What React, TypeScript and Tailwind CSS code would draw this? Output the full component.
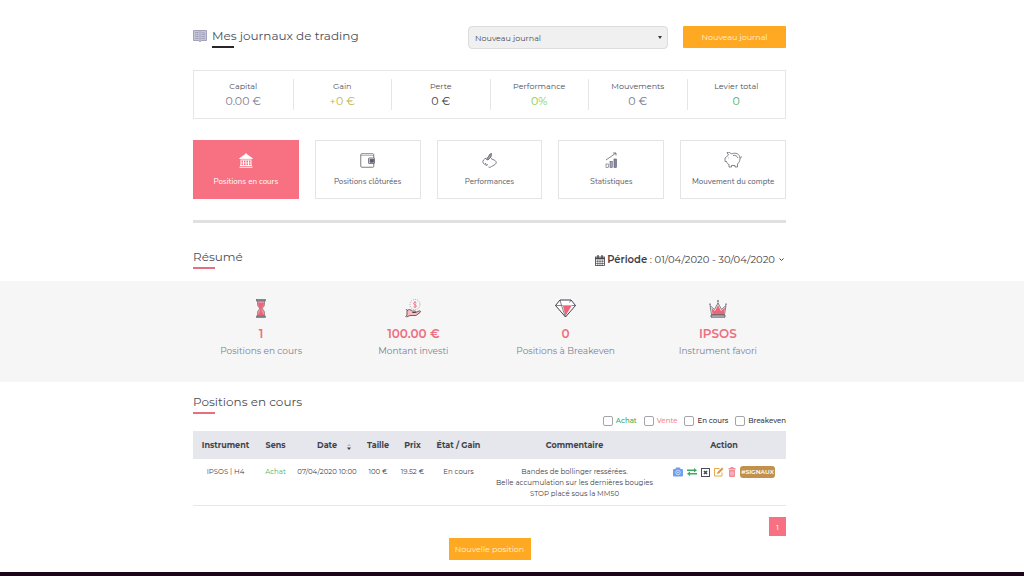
import React from 'react';

interface Stat {
    label: string;
    value: string;
    color: string;
}

const STATS: Stat[] = [
    { label: 'Capital', value: '0.00 €', color: 'text-[#7d7f8e]' },
    { label: 'Gain', value: '+0 €', color: 'text-[#c4b648]' },
    { label: 'Perte', value: '0 €', color: 'text-[#3f4047]' },
    { label: 'Performance', value: '0%', color: 'text-[#85cc4e]' },
    { label: 'Mouvements', value: '0 €', color: 'text-[#74788f]' },
    { label: 'Levier total', value: '0', color: 'text-[#45b06c]' },
];

const BookIcon = () => (
    <svg viewBox="0 0 28 28" className="h-[14px] w-[14px] shrink-0" fill="none" stroke="#a2a2bc" strokeWidth="2">
        <path d="M1 3h26v20H16l-2 3-2-3H1z" fill="#c6c6d9" />
        <path d="M14 3v20M4 7h7M4 11h3M4 15h7M4 19h7M17 7h3M17 11h7M17 15h7M17 19h7M9 9v4M22 6v4" />
    </svg>
);

const BankIcon = () => (
    <svg viewBox="0 0 28 30" className="h-[15px] w-[14px]" fill="none" stroke="currentColor" strokeWidth="1.600">
        <path d="M14 0v4" />
        <path d="M1 11 14 2l13 9z" fill="currentColor" />
        <path d="M3 14h22M2 25h24M1 28.500h26" strokeWidth="2" />
        <path d="M4 15v9M9 15v9M14 15v9M19 15v9M24 15v9" strokeWidth="2" />
        <path d="M4 20h20" strokeOpacity="0.500" strokeWidth="3" />
    </svg>
);

const WalletIcon = () => (
    <svg viewBox="0 0 30 30" className="h-[15px] w-[15px]" fill="none" stroke="currentColor" strokeWidth="1.600">
        <rect x="1.500" y="1.500" width="26" height="27" rx="2" />
        <path d="M2 5h25" strokeOpacity="0.500" />
        <rect x="17" y="10" width="12" height="11" rx="1" fill="#fff" />
        <rect x="20" y="12.500" width="7" height="6" fill="currentColor" />
    </svg>
);

const SwingIcon = () => (
    <svg viewBox="0 0 30 30" className="h-[15px] w-[15px]" fill="none" stroke="currentColor" strokeWidth="1.600" strokeLinejoin="round">
        <path d="M9 13 16 2l3-1-1 7-6 6z" fill="currentColor" fillOpacity="0.600" />
        <path d="M9 10c-6 2-8 6-7 9 0 2 2 3 4 4M7 20l1 5 4-2M13 28c2 1 4 1 6-1l7-4c4-3 3-7-2-9l-6-3" />
    </svg>
);

const ChartIcon = () => (
    <svg viewBox="0 0 26 32" className="h-4 w-[13px]" fill="none" stroke="currentColor" strokeWidth="1.200">
        <path d="M2 16 22 2M16 2h6v5" strokeWidth="1.500" />
        <rect x="2" y="24" width="4.500" height="7" />
        <rect x="10" y="19" width="4.500" height="12" fill="#a3a6bf" />
        <rect x="18" y="14" width="5" height="17" fill="#8387a5" />
    </svg>
);

const PigIcon = () => (
    <svg viewBox="0 0 36 32" className="h-4 w-[18px]" fill="none" stroke="currentColor" strokeWidth="1.500" strokeLinejoin="round">
        <path d="M9 6 6 1c4-1 7 0 9 3 9-4 17 0 17 9 0 5-2 8-5 11v6h-5v-3h-7v3h-5v-5c-3-1-4-3-5-6H2v-7c3-1 3-4 7-6z" />
        <path d="M18 7c5-1 8 1 10 5M32 12c2 0 3-1 3-3M9 12h1" />
    </svg>
);

const HourglassIcon = () => (
    <svg viewBox="0 0 20 38" className="h-[19px] w-[10px]" stroke="#6a5c68" strokeWidth="1.200">
        <path d="M3 3h14v8c0 4-4 6-4 8s4 4 4 8v8H3v-8c0-4 4-6 4-8s-4-4-4-8z" fill="#f0909c" />
        <path d="M4 8h12c0 5-4 7-5 10v7l5 7v2H4v-2l4-7v-7c-1-3-4-5-4-10z" fill="#ee6478" stroke="none" />
        <rect x="1" y="1" width="18" height="3" fill="#8b8d96" />
        <rect x="1" y="34" width="18" height="3" fill="#8b8d96" />
    </svg>
);

const HandCoinIcon = () => (
    <svg viewBox="0 0 32 38" className="h-[19px] w-4" fill="none" strokeWidth="1.500" strokeLinejoin="round">
        <circle cx="20" cy="11" r="10" stroke="#a08c93" strokeDasharray="2 2.200" />
        <path d="M23 8c-1-2-6-2-6 1 0 3 6 2 6 5s-5 3-6 1M20 4v14" stroke="#ee6478" />
        <path d="M4 23c4-3 7-2 11 1h5c2 0 2 3 0 3h-5 6l7-3c3-1 4 1 2 3l-8 6H10l-7 3" fill="#f8bcc3" stroke="#45363f" />
        <path d="M2 20l2 3v9l-3 4" stroke="#45363f" />
    </svg>
);

const DiamondIcon = () => (
    <svg viewBox="0 0 42 38" className="h-[19px] w-[21px]" fill="none" stroke="#3f414c" strokeWidth="2" strokeLinejoin="round">
        <path d="M10 2h22l9 11-20 23L1 13z" fill="#fff" />
        <path d="M16 14h17L21 34z" fill="#ee6478" stroke="none" />
        <path d="M1 13h12M33 13h8M10 2l3 11 8 23M32 2l-3 5" strokeWidth="1.300" />
        <path d="M14 13h18" stroke="#ee6478" strokeWidth="1.300" />
    </svg>
);

const CrownIcon = () => (
    <svg viewBox="0 0 36 38" className="h-[19px] w-[18px]" stroke="#3f414c" strokeWidth="1.300" strokeLinejoin="round">
        <path d="M5 31 2 13l9 8 7-13 7 13 9-8-3 18z" fill="#f3f3f5" />
        <path d="M7 30.500 5 18l7 6 6-12 6 12 8-7-2 13.500z" fill="#ee6478" stroke="none" />
        <path d="M18 2v5M2 9v3M34 9v3" strokeWidth="2" />
        <rect x="4" y="32" width="28" height="4.500" fill="#b9bac2" />
    </svg>
);

const CalendarIcon = () => (
    <svg viewBox="0 0 20 22" className="mr-0.5 h-[11px] w-[10px]" fill="none" stroke="currentColor" strokeWidth="1.600">
        <rect x="1" y="4" width="18" height="17" />
        <path d="M1 7h18" strokeWidth="3" />
        <path d="M5.500 9v12M10 9v12M14.500 9v12M1 12.500h18M1 17h18" strokeWidth="1.200" />
        <path d="M6 0v6M14 0v6" strokeWidth="2.500" />
    </svg>
);

const TABS = [
    { label: 'Positions en cours', icon: <BankIcon />, active: true },
    { label: 'Positions clôturées', icon: <WalletIcon />, active: false },
    { label: 'Performances', icon: <SwingIcon />, active: false },
    { label: 'Statistiques', icon: <ChartIcon />, active: false },
    { label: 'Mouvement du compte', icon: <PigIcon />, active: false },
];

const SUMMARY = [
    { icon: <HourglassIcon />, value: '1', label: 'Positions en cours' },
    { icon: <HandCoinIcon />, value: '100.00 €', label: 'Montant investi' },
    { icon: <DiamondIcon />, value: '0', label: 'Positions à Breakeven' },
    { icon: <CrownIcon />, value: 'IPSOS', label: 'Instrument favori' },
];

const FILTERS = [
    { id: 'achat', label: 'Achat', color: 'text-[#35ab54]' },
    { id: 'vente', label: 'Vente', color: 'text-[#f4848f]' },
    { id: 'encours', label: 'En cours', color: 'text-[#33343a]' },
    { id: 'breakeven', label: 'Breakeven', color: 'text-[#33343a]' },
];

const ACTIONS = [
    {
        label: 'Capture',
        icon: (
            <svg viewBox="0 0 20 20" className="h-[10px] w-[10px]" fill="#6f9fee">
                <path d="M6 1h8l1 3h3a2 2 0 0 1 2 2v11a2 2 0 0 1-2 2H2a2 2 0 0 1-2-2V6a2 2 0 0 1 2-2h3z" />
                <circle cx="10" cy="11" r="4.500" fill="none" stroke="#dfeafd" strokeWidth="1.500" />
                <circle cx="10" cy="11" r="1.500" fill="#dfeafd" />
            </svg>
        ),
    },
    {
        label: 'Convertir',
        icon: (
            <svg viewBox="0 0 20 16" className="h-2 w-[10px]" fill="#3aab62">
                <path d="M0 3h14V0l6 4.500L14 9V6H0zM20 10H6V7l-6 4.500L6 16v-3h14z" />
            </svg>
        ),
    },
    {
        label: 'Clôturer',
        icon: (
            <svg viewBox="0 0 18 18" className="h-[9px] w-[9px]" fill="none" stroke="#4b4e57" strokeWidth="2">
                <rect x="1" y="1" width="16" height="16" />
                <path d="m6 6 6 6M12 6l-6 6" strokeWidth="3.500" />
            </svg>
        ),
    },
    {
        label: 'Modifier',
        icon: (
            <svg viewBox="0 0 20 20" className="h-[10px] w-[10px]" fill="none" stroke="#eaa74a" strokeWidth="2">
                <path d="M11 3H1v15h15v-7" />
                <path d="m6 14 1-4 9-9 3 3-9 9z" fill="#dd9b40" stroke="none" />
            </svg>
        ),
    },
    {
        label: 'Supprimer',
        icon: (
            <svg viewBox="0 0 16 20" className="h-[10px] w-2" fill="#f28b96">
                <path d="M5 0h6v2h4v3H1V2h4zM2 6h12v12a2 2 0 0 1-2 2H4a2 2 0 0 1-2-2z" />
                <path d="M6 9v8M10 9v8" stroke="#fff" strokeWidth="1.200" />
            </svg>
        ),
    },
];

interface SectionTitleProps {
    children: React.ReactNode;
}

const SectionTitle: React.FC<SectionTitleProps> = ({ children }) => (
    <div>
        <h2 className="text-[12px] leading-4">{children}</h2>
        <div className="mt-0.5 h-0.5 w-[22px] bg-[#e66f7f]" />
    </div>
);

const App: React.FC = () => {
    return (
        <div className="bg-white font-['Montserrat','Inter','Liberation_Sans',sans-serif] text-[#4b4d57]">
            <main>
                <div className="pl-[193px] pr-[238px]">
                    {/* Header */}
                    <header className="flex items-start pt-[26px]">
                        <div className="flex flex-1 items-start gap-[5px]">
                            <div className="pt-[3px]">
                                <BookIcon />
                            </div>
                            <div>
                                <h1 className="pt-0.5 text-[12px] leading-4">Mes journaux de trading</h1>
                                <div className="mt-0.5 h-0.5 w-[22px] bg-[#27272b]" />
                            </div>
                        </div>
                        <div className="relative w-[200px]">
                            <select
                                aria-label="Journal"
                                className="block h-[23px] w-full appearance-none rounded-sm border border-[#dcdcdc] bg-[#f0f0f0] px-1.5 text-[8px] text-[#4b4d57]"
                            >
                                <option>Nouveau journal</option>
                            </select>
                            <span className="pointer-events-none absolute right-1.5 top-[10px] border-x-2 border-t-[3px] border-x-transparent border-t-[#3a3a3a]" />
                        </div>
                        <button className="ml-[15px] h-[22px] w-[103px] rounded-[1px] bg-[#ffa822] text-[8px] text-[#fff3dc]">
                            Nouveau journal
                        </button>
                    </header>

                    {/* Account figures */}
                    <section className="mt-[21px] grid h-[49px] grid-cols-6 items-center border border-[#e6e6e8] text-center">
                        {STATS.map((stat, index) => (
                            <div
                                key={stat.label}
                                className={`h-[31px] ${index > 0 ? 'border-l border-[#e6e6e8]' : ''}`}
                            >
                                <p className="text-[8px] leading-[14px]">{stat.label}</p>
                                <p className={`text-[11px] leading-4 ${stat.color}`}>{stat.value}</p>
                            </div>
                        ))}
                    </section>

                    {/* Tabs */}
                    <nav className="mt-[21px] grid grid-cols-5 gap-4">
                        {TABS.map((tab) => (
                            <button
                                key={tab.label}
                                className={`flex h-[59px] flex-col items-center whitespace-nowrap border pt-[11px] font-['Nunito','Noto_Sans',sans-serif] text-[8px] leading-3 ${tab.active ? 'border-[#f77182] bg-[#f77182] text-white' : 'border-[#e4e4e7] bg-white text-[#5b5d6b]'}`}
                            >
                                <span className="flex h-4 items-center">{tab.icon}</span>
                                <span className="mt-2">{tab.label}</span>
                            </button>
                        ))}
                    </nav>

                    <hr className="mt-[21px] h-[3px] border-0 bg-[#e0e0e0]" />

                    <div className="flex items-start justify-between pb-3 pt-[26px]">
                        <SectionTitle>Résumé</SectionTitle>
                        <button className="mt-1 flex items-center text-[10px] leading-[14px] text-[#3f4047]">
                            <CalendarIcon />
                            <span>
                                <b className="font-semibold">Période</b> : 01/04/2020 - 30/04/2020
                            </span>
                            <svg viewBox="0 0 10 8" className="ml-1 mr-0.5 h-1 w-[5px]" fill="none" stroke="currentColor" strokeWidth="2">
                                <path d="m1 1 4 4 4-4" />
                            </svg>
                        </button>
                    </div>
                </div>

                {/* Summary band */}
                <section className="h-[101px] bg-[#f6f6f6] pl-[185px] pr-[230px] pt-[18px]">
                    <div className="grid grid-cols-4 text-center">
                        {SUMMARY.map((item) => (
                            <div key={item.label} className="flex flex-col items-center">
                                {item.icon}
                                <p className="mt-2 text-[12px] font-semibold leading-4 text-[#ee6f80]">{item.value}</p>
                                <p className="mt-0.5 text-[9px] leading-[14px] text-[#7c7f92]">{item.label}</p>
                            </div>
                        ))}
                    </div>
                </section>

                <div className="pl-[193px] pr-[238px] pt-3">
                    <SectionTitle>Positions en cours</SectionTitle>

                    <div className="flex h-[17px] items-start justify-end gap-[7px]">
                        {FILTERS.map((filter) => (
                            <div key={filter.id} className="flex items-center gap-[3px]">
                                <input
                                    id={filter.id}
                                    type="checkbox"
                                    className="h-[10px] w-[10px] appearance-none rounded-[2px] border border-[#a3a5aa] bg-white checked:bg-[#a3a5aa]"
                                />
                                <label htmlFor={filter.id} className={`text-[7px] font-medium leading-[14px] ${filter.color}`}>
                                    {filter.label}
                                </label>
                            </div>
                        ))}
                    </div>

                    <table className="w-full table-fixed text-center">
                        <colgroup>
                            <col className="w-[65px]" />
                            <col className="w-[35px]" />
                            <col className="w-[68px]" />
                            <col className="w-[34px]" />
                            <col className="w-[35px]" />
                            <col className="w-[57px]" />
                            <col className="w-[175px]" />
                            <col className="w-[124px]" />
                        </colgroup>
                        <thead>
                            <tr className="h-7 whitespace-nowrap bg-[#e5e7ec] text-[8px] text-[#41434b]">
                                <th>Instrument</th>
                                <th>Sens</th>
                                <th className="relative">
                                    Date
                                    <svg viewBox="0 0 8 12" className="absolute right-[10px] top-[13px] h-1.5 w-1">
                                        <path d="M0 4h8L4 0z" fill="#b6b8c0" />
                                        <path d="M0 7h8l-4 5z" fill="#3f4047" />
                                    </svg>
                                </th>
                                <th>Taille</th>
                                <th>Prix</th>
                                <th>État / Gain</th>
                                <th>Commentaire</th>
                                <th>Action</th>
                            </tr>
                        </thead>
                        <tbody>
                            <tr className="whitespace-nowrap border-b border-[#e8e8ea] align-top text-[7px] leading-[11px] text-[#3f4047]">
                                <td className="pt-[7px]">IPSOS | H4</td>
                                <td className="pt-[7px] text-[#45b562]">Achat</td>
                                <td className="pt-[7px]">07/04/2020 10:00</td>
                                <td className="pt-[7px]">100 €</td>
                                <td className="pt-[7px]">19.52 €</td>
                                <td className="pt-[7px]">En cours</td>
                                <td className="pb-1.5 pt-[7px]">
                                    Bandes de bollinger ressérées.
                                    <br />
                                    Belle accumulation sur les dernières bougies
                                    <br />
                                    STOP placé sous la MM50
                                </td>
                                <td className="pt-[7px]">
                                    <div className="flex items-center justify-center gap-1">
                                        {ACTIONS.map((action) => (
                                            <button key={action.label} aria-label={action.label}>
                                                {action.icon}
                                            </button>
                                        ))}
                                        <a href="#signaux" className="rounded-[3px] bg-[#c2914e] px-px text-[6px] font-semibold leading-3 text-white">
                                            #SIGNAUX
                                        </a>
                                    </div>
                                </td>
                            </tr>
                        </tbody>
                    </table>

                    {/* Pagination */}
                    <div className="mt-[11px] flex justify-end">
                        <button className="h-[19px] w-[17px] bg-[#f77182] text-[8px] text-white">1</button>
                    </div>

                    <div className="flex justify-center pb-3 pt-0.5">
                        <button className="h-[22px] w-[82px] bg-[#ffa822] text-[8px] text-[#fff3dc]">Nouvelle position</button>
                    </div>
                </div>
            </main>
            <footer className="h-1 bg-[#1a0418]" />
        </div>
    );
};

export default App;
